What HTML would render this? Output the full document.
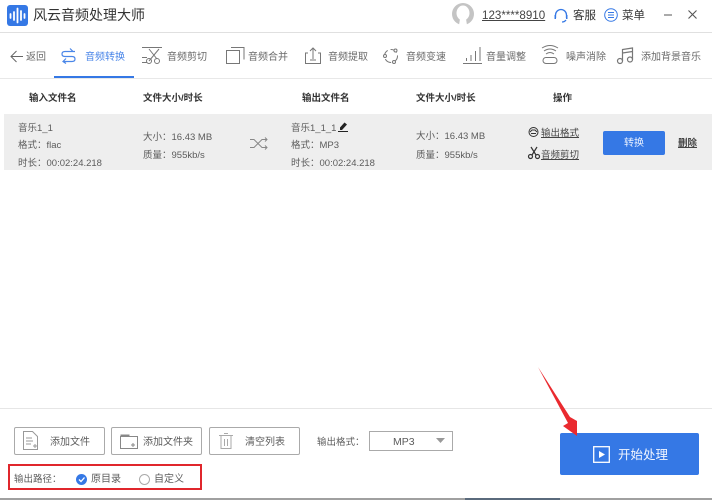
<!DOCTYPE html>
<html lang="zh"><head><meta charset="utf-8"><title>风云音频处理大师</title>
<style>
*{margin:0;padding:0;box-sizing:border-box}
html,body{width:712px;height:500px;overflow:hidden;background:#fff}
body{position:relative;font-family:"Liberation Sans","Noto Sans CJK SC",sans-serif;color:#5c5c5c}
.t{position:absolute;white-space:nowrap;line-height:14px}
.s{font-size:9.5px}
.b{font-size:9.5px;font-weight:bold;color:#333}
.tab{font-size:10px;color:#6a6a6a;top:51px}
.box{position:absolute;border:1px solid #aaa;border-radius:2px;background:#fff}
svg{position:absolute;overflow:visible;fill:none}
.l{position:absolute}
</style></head><body>
<div class="l" style="left:0;top:32px;width:712px;height:1px;background:#e0e0e0"></div>
<div class="l" style="left:0;top:78px;width:712px;height:1px;background:#e8e8e8"></div>
<div class="l" style="left:54px;top:76px;width:80px;height:2px;background:#3578e5"></div>
<div class="l" style="left:4px;top:114px;width:708px;height:56px;background:#eeeeee"></div>
<div class="l" style="left:0;top:408px;width:712px;height:1px;background:#e6e6e6"></div>
<div class="l" style="left:0;top:498px;width:712px;height:2px;background:#a0a0a0"></div>
<div class="l" style="left:465px;top:498px;width:95px;height:2px;background:#5a6a7c"></div>

<svg style="left:7px;top:5px" width="21" height="21"><rect width="21" height="21" rx="3" fill="#3578e5"/><path d="M3.500 9v4M7 7v8M10.500 3.500v14M14 6v9M17.500 9v4" stroke="#fff" stroke-width="1.800" stroke-linecap="round"/></svg>
<div class="t" style="left:33px;top:7px;font-size:14px;line-height:17px;color:#333">风云音频处理大师</div>

<svg style="left:452px;top:3px" width="22" height="22"><circle cx="11" cy="11" r="11" fill="#c4c4c4"/><ellipse cx="11" cy="10" rx="6.500" ry="7.500" fill="#fff"/><path d="M8 16h6l1 6H7z" fill="#fff"/></svg>
<div class="t" style="left:482px;top:9px;font-size:11.600px;color:#444;text-decoration:underline">123****8910</div>
<svg style="left:554px;top:8px" width="14" height="15" stroke="#3578e5" stroke-width="1.300"><path d="M1.500 10V7a5.500 5.500 0 0 1 11 0v3M12 12q-1.500 2-4 2"/><rect x=".5" y="7" width="1.500" height="4" fill="#3578e5" stroke="none"/><rect x="12" y="7" width="1.500" height="4" fill="#3578e5" stroke="none"/></svg>
<div class="t" style="left:573px;top:9px;font-size:11.500px;color:#333">客服</div>
<svg style="left:604px;top:8px" width="14" height="14" stroke="#3578e5"><circle cx="7" cy="7" r="6.300"/><path d="M4 4.500h6M4 7h6M4 9.500h6"/></svg>
<div class="t" style="left:622px;top:9px;font-size:11.500px;color:#333">菜单</div>
<svg style="left:664px;top:9px" width="40" height="12" stroke="#555" stroke-width="1.100"><path d="M0 6h8M24.500 1.500l8 8M32.500 1.500l-8 8"/></svg>

<svg style="left:10px;top:50px" width="14" height="13" stroke="#666" stroke-width="1"><path d="M13 6.500H1M6.500 1L1 6.500 6.500 12"/></svg>
<div class="t tab" style="left:26px">返回</div>
<svg style="left:61px;top:47px" width="15" height="17" stroke="#4a86e8" stroke-width="1.200"><path d="M14 4.500H4Q1 4.500 1 7t3 2.500h7q3 0 3 2.500t-3 2.500H2M9 1.500l3 3M5 11.500l-3 3 3 2"/></svg>
<div class="t tab" style="left:85px;color:#4a86e8">音频转换</div>
<svg style="left:142px;top:47px" width="21" height="17" stroke="#777"><path d="M0 .5h20M0 10.500h5M0 15.500h5M17 2L7 14M7 2l8 10"/><circle cx="7" cy="14" r="2.500"/><circle cx="15" cy="14" r="2.500"/></svg>
<div class="t tab" style="left:167px">音频剪切</div>
<svg style="left:226px;top:46px" width="19" height="18" stroke="#777"><rect x=".5" y="4.500" width="13" height="13"/><path d="M5 1.500h13v12"/></svg>
<div class="t tab" style="left:248px">音频合并</div>
<svg style="left:305px;top:47px" width="16" height="17" stroke="#777"><path d="M3 6H.5v10.500h15V6H13M8 12V1M5 4l3-3 3 3M5 13h6"/></svg>
<div class="t tab" style="left:328px">音频提取</div>
<svg style="left:383px;top:48px" width="16" height="16" stroke="#777"><circle cx="8" cy="8" r="6.500" stroke-dasharray="7 3"/><circle cx="12.500" cy="2.500" r="1.500" fill="#fff"/><circle cx="2" cy="8" r="1.500" fill="#fff"/><circle cx="11" cy="14" r="1.500" fill="#fff"/></svg>
<div class="t tab" style="left:406px">音频变速</div>
<svg style="left:463px;top:47px" width="20" height="17" stroke="#777"><path d="M0 16.500h19M3.500 14v-3M8 14V8M12.500 14V4M17 14V0"/></svg>
<div class="t tab" style="left:486px">音量调整</div>
<svg style="left:542px;top:46px" width="16" height="18" stroke="#777"><rect x="1" y="11.500" width="14" height="6" rx="3"/><path d="M4 8q4-3 8 0M2 5q6-4 12 0M0 2q8-5 16 0"/></svg>
<div class="t tab" style="left:566px">噪声消除</div>
<svg style="left:617px;top:47px" width="16" height="17" stroke="#777" stroke-width="1.200"><circle cx="3" cy="14" r="2.500"/><circle cx="13" cy="12.500" r="2.500"/><path d="M5.500 14V2.500L15.500 1v11.500M5.500 6L15.500 4.500"/></svg>
<div class="t tab" style="left:641px">添加背景音乐</div>

<div class="t b" style="left:29px;top:92px">输入文件名</div>
<div class="t b" style="left:143px;top:92px">文件大小/时长</div>
<div class="t b" style="left:302px;top:92px">输出文件名</div>
<div class="t b" style="left:416px;top:92px">文件大小/时长</div>
<div class="t b" style="left:553px;top:92px">操作</div>

<div class="t s" style="left:18px;top:122px">音乐1_1</div>
<div class="t s" style="left:18px;top:139px">格式：flac</div>
<div class="t s" style="left:18px;top:157px">时长：00:02:24.218</div>
<div class="t s" style="left:143px;top:131px">大小：16.43 MB</div>
<div class="t s" style="left:143px;top:149px">质量：955kb/s</div>
<svg style="left:250px;top:137px" width="18" height="13" stroke="#888"><path d="M0 2.500h4l8 8h5M0 10.500h4l8-8h5M15 .5l2 2-2 2M15 8.500l2 2-2 2"/></svg>
<div class="t s" style="left:291px;top:122px">音乐1_1_1</div>
<svg style="left:338px;top:122px" width="11" height="10"><path d="M0 9.500h10" stroke="#222"/><path d="M2 5.500l4.500-5 2.500 2-5 5.500H2z" fill="#222"/></svg>
<div class="t s" style="left:291px;top:139px">格式：MP3</div>
<div class="t s" style="left:291px;top:157px">时长：00:02:24.218</div>
<div class="t s" style="left:416px;top:130px">大小：16.43 MB</div>
<div class="t s" style="left:416px;top:149px">质量：955kb/s</div>
<svg style="left:528px;top:127px" width="11" height="10" stroke="#333"><circle cx="5.500" cy="5" r="4.500"/><path d="M2 5l2-2h3l2 2M3 6.500h5"/></svg>
<div class="t s" style="left:541px;top:127px;color:#444;text-decoration:underline">输出格式</div>
<svg style="left:528px;top:147px" width="12" height="12" stroke="#333" stroke-width="1.200"><path d="M3 0l5 8M9 0L4 8"/><circle cx="2.500" cy="9.500" r="2"/><circle cx="9.500" cy="9.500" r="2"/></svg>
<div class="t s" style="left:541px;top:149px;color:#444;text-decoration:underline">音频剪切</div>
<div class="l" style="left:603px;top:131px;width:62px;height:24px;background:#3578e5;border-radius:2px"></div>
<div class="t" style="left:603px;top:137px;width:62px;text-align:center;color:#e8f0ff;font-size:10px">转换</div>
<div class="t s" style="left:678px;top:137px;color:#444;text-decoration:underline;font-weight:bold">删除</div>

<div class="box" style="left:14px;top:427px;width:91px;height:28px"></div>
<svg style="left:23px;top:431px" width="15" height="19" stroke="#999"><path d="M.5.500h9l5 5v13H.5zM3 7h6M3 10h7M3 13h5M10 15h4M12 13v4"/></svg>
<div class="t" style="left:50px;top:436px;font-size:10px">添加文件</div>
<div class="box" style="left:111px;top:427px;width:91px;height:28px"></div>
<svg style="left:120px;top:434px" width="18" height="15" stroke="#888"><path d="M.5 2.500h17v12H.5z"/><path d="M1 1h8v1.500H1z" fill="#888"/><path d="M11 11h4M13 9v4"/></svg>
<div class="t" style="left:143px;top:436px;font-size:10px">添加文件夹</div>
<div class="box" style="left:209px;top:427px;width:91px;height:28px"></div>
<svg style="left:219px;top:433px" width="14" height="16" stroke="#aaa"><path d="M0 2.500h14M5 .5h4M2 3v12.500h10V3M5.500 6v7M8.500 6v7"/></svg>
<div class="t" style="left:245px;top:436px;font-size:10px">清空列表</div>
<div class="t" style="left:317px;top:436px;font-size:9.500px">输出格式：</div>
<div class="box" style="left:369px;top:431px;width:84px;height:20px;border-radius:0"></div>
<div class="t" style="left:393px;top:435px;font-size:10.500px">MP3</div>
<svg style="left:436px;top:438px" width="10" height="6"><path d="M0 0h9L4.500 5z" fill="#999"/></svg>

<div class="l" style="left:8px;top:464px;width:194px;height:26px;border:2px solid #e0262c"></div>
<div class="t s" style="left:14px;top:473px">输出路径：</div>
<svg style="left:76px;top:474px" width="11" height="11"><circle cx="5.500" cy="5.500" r="5.500" fill="#3578e5"/><path d="M3 5.500l2 2 3.500-4" stroke="#fff" stroke-width="1.300"/></svg>
<div class="t" style="left:91px;top:473px;font-size:10px">原目录</div>
<svg style="left:139px;top:474px" width="11" height="11" stroke="#aaa"><circle cx="5.500" cy="5.500" r="5"/></svg>
<div class="t" style="left:154px;top:473px;font-size:10px">自定义</div>

<div class="l" style="left:560px;top:433px;width:139px;height:42px;background:#3578e5;border-radius:2px"></div>
<svg style="left:593px;top:446px" width="17" height="17" stroke="#fff" stroke-width="1.300"><rect x=".7" y=".7" width="15.600" height="15.600"/><path d="M6 5l6 3.500L6 12z" fill="#fff" stroke="none"/></svg>
<div class="t" style="left:618px;top:448px;font-size:12.500px;color:#f0f5ff">开始处理</div>
<svg style="left:0;top:0" width="712" height="500"><path d="M538 367L570 417 577 421 577 436 563 426 568 423z" fill="#ea2a2f"/></svg>
</body></html>
